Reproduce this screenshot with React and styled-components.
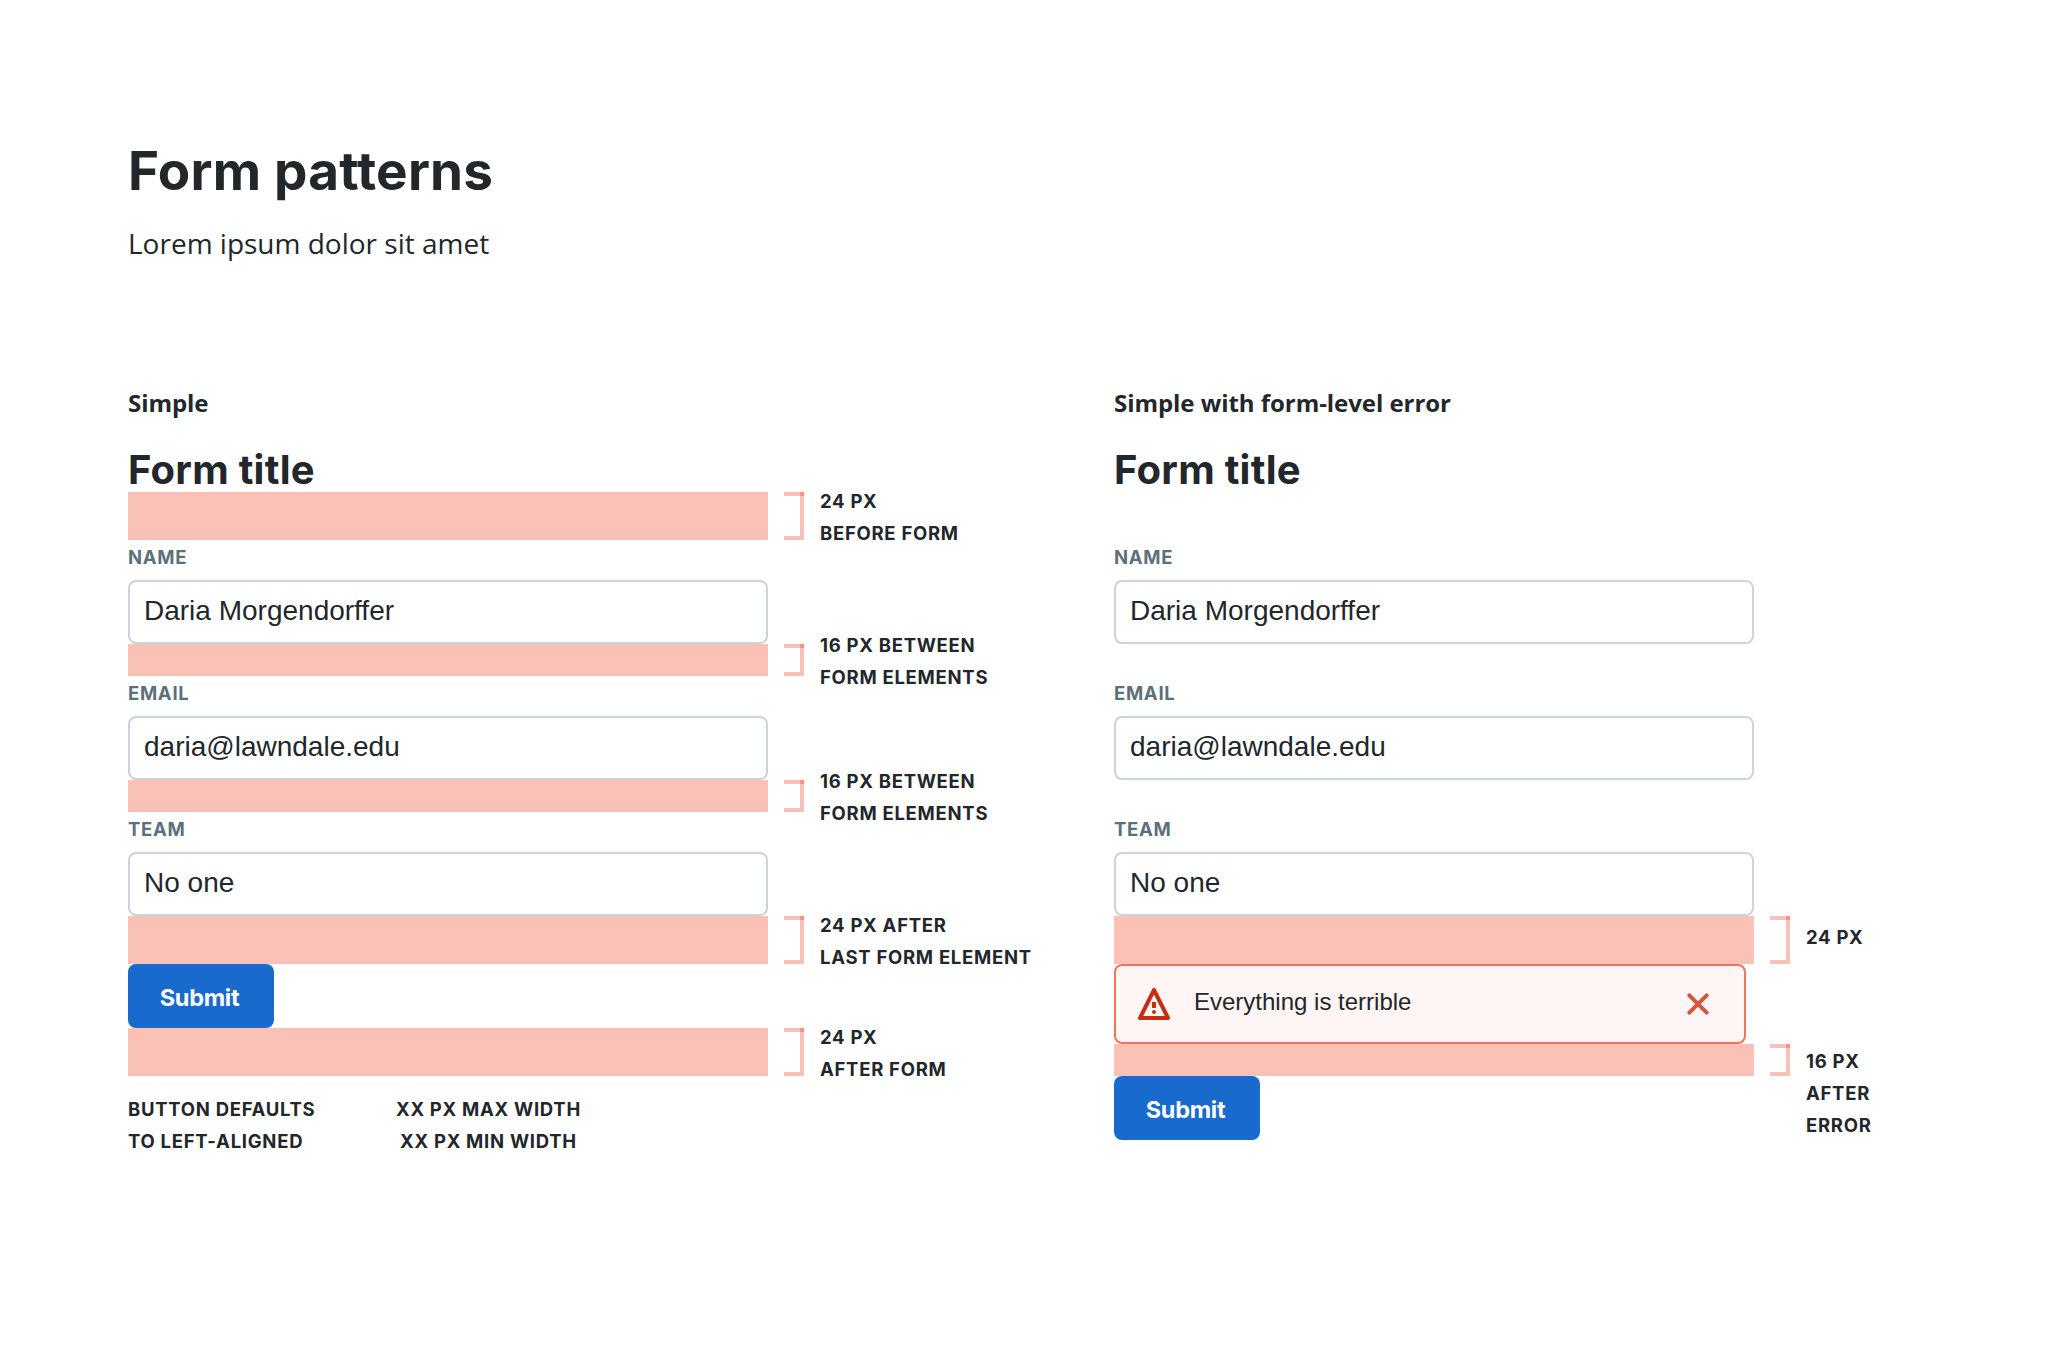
import React from "react";
import styled, { createGlobalStyle } from "styled-components";

const ink = "#22272b";
const display = `Inter, "Open Sans", sans-serif`;
const prose = `"Open Sans", "Noto Sans", sans-serif`;
const system = `"Liberation Sans", Arial, sans-serif`;

const GlobalStyle = createGlobalStyle`
  * { box-sizing: border-box; }
  body { margin: 0; background: #fff; color: ${ink}; }
  h1, h2, h3, p { margin: 0; }
`;

const Page = styled.main`
  display: flex;
  flex-direction: column;
  width: 2048px;
  height: 1356px;
  padding: 139px 128px 0;
  overflow: hidden;
`;

const PageTitle = styled.h1`
  font: 700 53px/64px ${display};
  letter-spacing: 0.22px;
  white-space: nowrap;
`;

const Lead = styled.p`
  margin-top: 20px;
  font: 400 28px/40px ${prose};
`;

const Columns = styled.div`
  display: grid;
  grid-template-columns: 986px 1fr;
  margin-top: 124px;
`;

const Column = styled.section`
  display: flex;
  flex-direction: column;
  align-items: flex-start;
`;

const Caption = styled.h2`
  font: 700 24px/32px ${prose};
  letter-spacing: -0.05px;
  white-space: nowrap;
`;

const FormTitle = styled.h3`
  height: 73px;
  padding-top: 28px;
  font: 700 40px/46px ${display};
  letter-spacing: 0.25px;
  white-space: nowrap;
`;

const SpacerRow = styled.div`
  display: flex;
  align-items: flex-start;
  gap: 16px;
  height: ${(p) => p.$size * 2}px;
`;

const Spacer = styled.div`
  width: 640px;
  height: 100%;
  background: ${(p) => (p.$hidden ? "transparent" : "#fac1b6")};
`;

const Bracket = styled.div`
  display: grid;
  grid-template: 4px 1fr 4px / 16px 4px;
  width: 20px;
  height: 100%;
  background: #fac1b6;

  &::before {
    content: "";
    grid-area: 2 / 1;
    background: #fff;
  }

  &::after {
    content: "";
    grid-area: 1 / 2;
    background: #f99585;
  }
`;

const Note = styled.p`
  margin-top: ${(p) => p.$top || 0}px;
  font: 700 18.5px/32px ${display};
  letter-spacing: 0.72px;
  text-align: ${(p) => (p.$center ? "center" : "left")};
  text-transform: uppercase;
  white-space: pre;
`;

const Field = styled.label`
  display: flex;
  flex-direction: column;
  width: 640px;
`;

const FieldLabel = styled.span`
  height: 40px;
  padding-top: 1px;
  font: 700 18.5px/32px ${display};
  letter-spacing: 0.7px;
  color: #5c707c;
  text-transform: uppercase;
`;

const TextInput = styled.input`
  height: 64px;
  padding: 0 14px 2px;
  border: 2px solid #ccd3d9;
  border-radius: 8px;
  outline: 0;
  background: #fff;
  color: ${ink};
  font: 400 28px ${system};
`;

const Submit = styled.button`
  width: 146px;
  height: 64px;
  padding: 2px 3px 0 0;
  border: 0;
  border-radius: 8px;
  background: #186bcd;
  color: #fff;
  font: 700 23.5px ${display};
  letter-spacing: -0.3px;
`;

const Alert = styled.div`
  display: flex;
  align-items: center;
  width: 632px;
  height: 80px;
  padding: 0 34px 0 22px;
  border: 2px solid #f2725c;
  border-radius: 8px;
  background: #fff5f4;
`;

const AlertText = styled.p`
  flex: 1;
  padding: 0 0 4px 24px;
  font: 400 24px/32px ${system};
`;

const Footnotes = styled.div`
  display: grid;
  grid-template-columns: 268px auto;
  align-items: start;
  margin-top: 17px;
`;

const WarningIcon = () => (
  <svg width="32" height="32" viewBox="0 0 32 32" fill="none">
    <path d="M16 2 2 30h28z" stroke="#c62e14" strokeWidth="4" strokeLinejoin="round" />
    <path d="M14 14h4v6h-4z" fill="#c62e14" />
    <circle cx="16" cy="24" r="2" fill="#c62e14" />
  </svg>
);

const CloseIcon = () => (
  <svg width="24" height="24" viewBox="0 0 24 24" fill="none">
    <path d="M3.3 3.3l17.4 17.4M20.7 3.3 3.3 20.7" stroke="#d1573f" strokeWidth="4" strokeLinecap="round" />
  </svg>
);

const Measure = ({ size, note, top }) => (
  <SpacerRow $size={size}>
    <Spacer $hidden={!note} />
    {note && <Bracket />}
    {note && <Note $top={top}>{note}</Note>}
  </SpacerRow>
);

const TextField = ({ label, value }) => (
  <Field>
    <FieldLabel>{label}</FieldLabel>
    <TextInput defaultValue={value} spellCheck={false} />
  </Field>
);

export default function App() {
  return (
    <Page>
      <GlobalStyle />
      <PageTitle>Form patterns</PageTitle>
      <Lead>Lorem ipsum dolor sit amet</Lead>
      <Columns>
        <Column>
          <Caption>Simple</Caption>
          <FormTitle>Form title</FormTitle>
          <Measure size={24} top={-7} note={"24 px\nbefore form"} />
          <TextField label="Name" value="Daria Morgendorffer" />
          <Measure size={16} top={-15} note={"16 px between\nform elements"} />
          <TextField label="Email" value="daria@lawndale.edu" />
          <Measure size={16} top={-15} note={"16 px between\nform elements"} />
          <TextField label="Team" value="No one" />
          <Measure size={24} top={-7} note={"24 px after\nlast form element"} />
          <Submit>Submit</Submit>
          <Measure size={24} top={-7} note={"24 px\nafter form"} />
          <Footnotes>
            <Note>{"Button defaults\nto left-aligned"}</Note>
            <Note $center>{"XX px max width\nXX px min width"}</Note>
          </Footnotes>
        </Column>
        <Column>
          <Caption>Simple with form-level error</Caption>
          <FormTitle>Form title</FormTitle>
          <Measure size={24} />
          <TextField label="Name" value="Daria Morgendorffer" />
          <Measure size={16} />
          <TextField label="Email" value="daria@lawndale.edu" />
          <Measure size={16} />
          <TextField label="Team" value="No one" />
          <Measure size={24} top={5} note="24 px" />
          <Alert>
            <WarningIcon />
            <AlertText>Everything is terrible</AlertText>
            <CloseIcon />
          </Alert>
          <Measure size={16} top={1} note={"16 px\nafter\nerror"} />
          <Submit>Submit</Submit>
        </Column>
      </Columns>
    </Page>
  );
}
